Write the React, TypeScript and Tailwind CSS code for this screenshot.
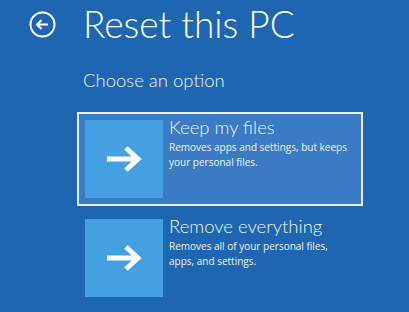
import React from "react";

function Arrow() {
  return (
    <svg width="37" height="30" viewBox="0 0 37 30">
      <path d="M1 15 H31 M20 4 L32 15 L20 26" stroke="white" strokeWidth="5" fill="none" strokeLinejoin="miter" />
    </svg>
  );
}

const light = { fontFamily: '"Lato", "Open Sans", sans-serif', fontWeight: 300 } as const;

function Option({ title, lines, selected }: { title: string; lines: string[]; selected?: boolean }) {
  return (
    <div
      className={`flex w-[286px] h-[94px] pl-[6px] pt-[6px] gap-[6px] ${
        selected ? "border-2 border-[#e8f0fa] bg-[#3a7bc3]" : "border-2 border-transparent"
      }`}
    >
      <div className="w-[78px] h-[78px] bg-[#45a0e2] flex items-center justify-center shrink-0">
        <Arrow />
      </div>
      <div className="flex flex-col text-[#eef4fb]">
        <div className="text-[18.5px] leading-[22px] mt-[-4px]" style={light}>{title}</div>
        <div className="text-[10px] leading-[15px] mt-[2px] whitespace-nowrap">
          {lines.map((l) => (
            <div key={l}>{l}</div>
          ))}
        </div>
      </div>
    </div>
  );
}

export default function App() {
  return (
    <div
      className="w-[409px] h-[312px] bg-[#1f66b2] overflow-hidden relative"
      style={{ fontFamily: '"Open Sans", "Noto Sans", sans-serif' }}
    >
      <div className="flex items-center pt-[1px] pl-[29px]">
        <svg width="27" height="27" viewBox="0 0 27 27" className="mt-[1px]">
          <circle cx="13.5" cy="13.5" r="12" stroke="white" strokeWidth="2" fill="none" />
          <path d="M19 13.5 H8.5 M12.5 9 L8 13.5 L12.5 18" stroke="white" strokeWidth="2" fill="none" />
        </svg>
        <div className="ml-[27px] text-white text-[37px] leading-[46px]" style={light}>Reset this PC</div>
      </div>
      <div className="pl-[83px] mt-[22px] text-[18.5px] leading-[22px] text-[#eef4fb]" style={light}>Choose an option</div>
      <div className="pl-[77px] mt-[21px] flex flex-col gap-[5px]">
        <Option title="Keep my files" lines={["Removes apps and settings, but keeps", "your personal files."]} selected />
        <Option title="Remove everything" lines={["Removes all of your personal files,", "apps, and settings."]} />
      </div>
    </div>
  );
}
